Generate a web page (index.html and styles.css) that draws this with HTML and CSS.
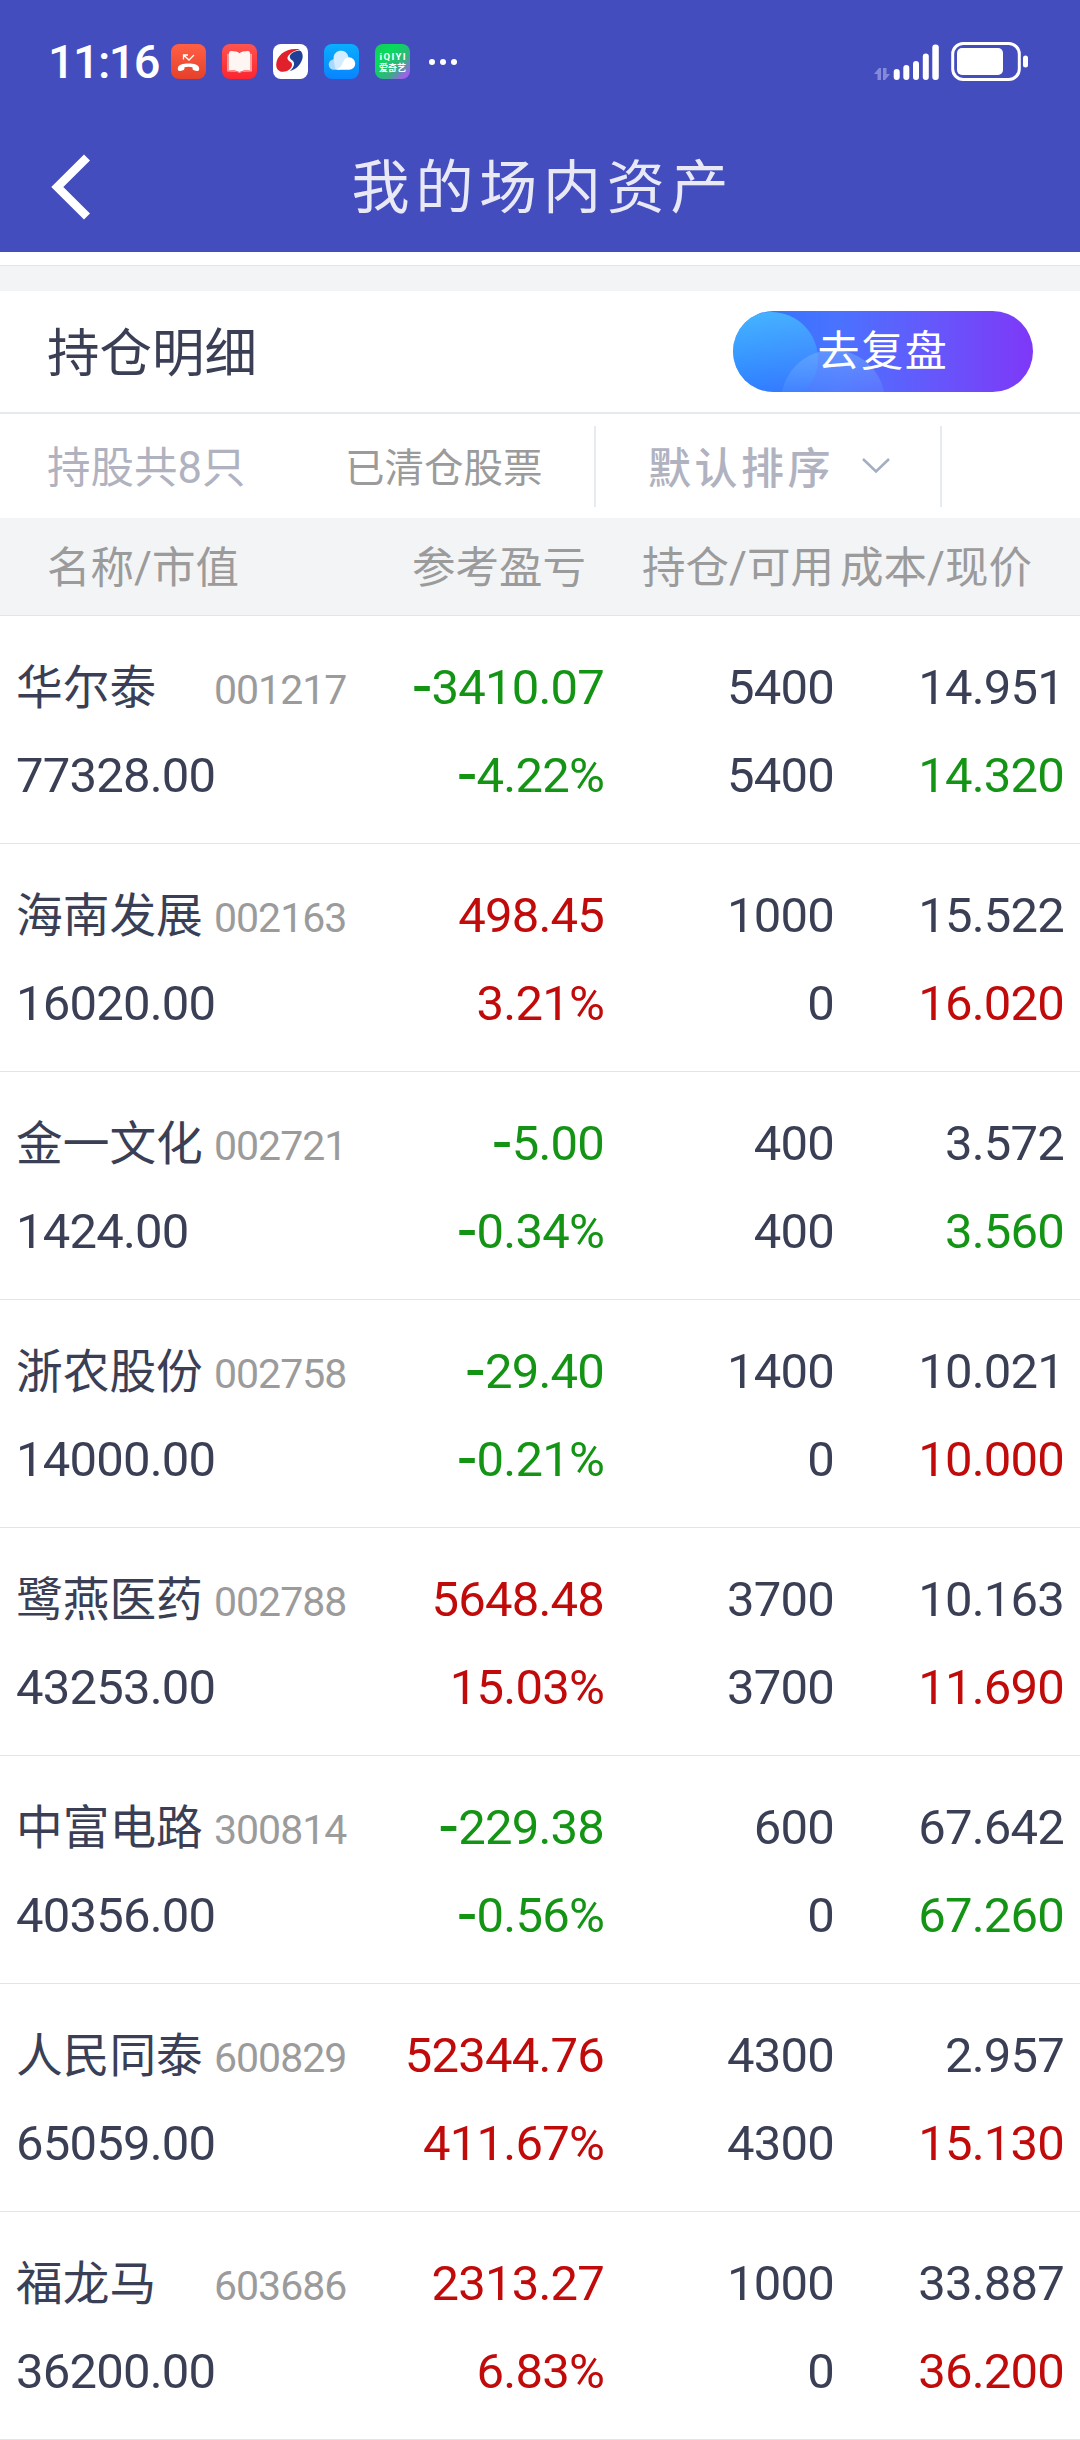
FILE: index.html
```
<!DOCTYPE html>
<html lang="zh-CN">
<head>
    <meta charset="UTF-8">
    <meta name="viewport" content="width=device-width, initial-scale=1.0">
    <title>我的场内资产</title>
    <link rel="stylesheet" href="styles.css">
</head>
<body>
    <header class="header">
        <div class="status-bar">
            <span class="time">11:16</span>
            <div class="apps">
                <svg class="app" viewBox="0 0 35 35">
                    <defs>
                        <linearGradient id="gCall" x1="0" y1="0" x2="0" y2="1"><stop offset="0" stop-color="#ff6045"/><stop offset="1" stop-color="#e6402a"/></linearGradient>
                    </defs>
                    <rect width="35" height="35" rx="8" fill="url(#gCall)"/>
                    <path d="M12.5 15.5V11h4.500M12.500 11l5.500 5 5-5" fill="none" stroke="#fff" stroke-width="1.300"/>
                    <path d="M6.800 24.500c0-4 5.500-5 10.700-5s10.700 1 10.700 5c0 2.600-1 2.600-3.500 2.200-3-.5-3.200-1.200-3.200-3.500-2.500-.7-5.500-.7-8 0 0 2.300-.2 3-3.200 3.500-2.500.4-3.500.4-3.500-2.200z" fill="#fff"/>
                </svg>
                <svg class="app" viewBox="0 0 35 35">
                    <defs>
                        <linearGradient id="gBook" x1="0" y1="0" x2="0" y2="1"><stop offset="0" stop-color="#ff5450"/><stop offset="1" stop-color="#fb2530"/></linearGradient>
                    </defs>
                    <rect width="35" height="35" rx="8" fill="url(#gBook)"/>
                    <path d="M5 10l2.500-.5v16.500l10 2 10-2V9.500l2.500.5v17.500l-10 .5-2.500 1-2.500-1-10-.5z" fill="#ff9d98"/>
                    <path d="M7 9q0-2 2-2 6 0 8.500 2.200Q20 7 26 7q2 0 2 2v17q-7 0-10.500 2Q14 26 7 26z" fill="#fff5f3"/>
                </svg>
                <svg class="app" viewBox="0 0 35 35">
                    <rect width="35" height="35" rx="8" fill="#fff"/>
                    <path d="M27 5.500C14 3 3.500 11 3.200 20.500 3 27.500 9 29 14 27c5-2.200 6.500-7 3.500-9-3-2-4-4-2-6.500 2.500-3.500 7-5.500 11.500-6z" fill="#e2202c"/>
                    <path d="M26.500 6.500c-4 .3-8 2.300-9.500 5-1 2.200.500 3.500 2.500 5 3 2.300 1.500 7.500-3 10.700C24 25.500 29.500 18.500 29.700 12.500c0-3-1-5.200-3.200-6z" fill="#213f96"/>
                </svg>
                <svg class="app" viewBox="0 0 35 35">
                    <defs>
                        <linearGradient id="gCloud" x1="0" y1="0" x2="0" y2="1"><stop offset="0" stop-color="#09aeff"/><stop offset="1" stop-color="#0884ff"/></linearGradient>
                    </defs>
                    <rect width="35" height="35" rx="8" fill="url(#gCloud)"/>
                    <circle cx="10" cy="20.500" r="5.300" fill="#a9d9ff"/>
                    <path d="M9.500 15.500a7.600 7.600 0 0 1 15-2.500L16 25.500h-4.500z" fill="#d4ecff"/>
                    <path d="M11.500 25.800c5-1.500 6-4 7.500-7.500 1.500-3.500 3.500-5 6-5a6.200 6.200 0 0 1 0 12.500z" fill="#fff"/>
                </svg>
                <svg class="app" viewBox="0 0 35 35">
                    <defs>
                        <linearGradient id="gIqiyi" x1="0" y1="0" x2="1" y2="1"><stop offset="0" stop-color="#19c95c"/><stop offset=".3" stop-color="#05dc5a"/><stop offset=".65" stop-color="#35b082"/><stop offset=".9" stop-color="#a45cf0"/></linearGradient>
                    </defs>
                    <rect width="35" height="35" rx="8" fill="url(#gIqiyi)"/>
                    <text class="iqiyi-en" x="17.500" y="16" text-anchor="middle" textLength="26">iQIYI</text>
                    <text class="iqiyi-cn" x="17.500" y="26.500" text-anchor="middle">爱奇艺</text>
                </svg>
            </div>
            <svg class="more" width="30" height="8" viewBox="0 0 30 8" fill="#fff">
                <circle cx="4" cy="4" r="3"/>
                <circle cx="15" cy="4" r="3"/>
                <circle cx="26" cy="4" r="3"/>
            </svg>
            <svg class="signal" width="66" height="40" viewBox="0 0 66 40">
                <path d="M0 32l5-6h2v12H3.500v-6zM9 26h3.500v6H16l-5 6H9z" fill="#8589da"/>
                <g fill="#fff">
                    <rect x="19.700" y="27" width="6" height="11" rx="3"/>
                    <rect x="29.300" y="23" width="6" height="15" rx="3"/>
                    <rect x="39" y="19" width="6" height="19" rx="3"/>
                    <rect x="48.800" y="11.500" width="6" height="26.500" rx="3"/>
                    <rect x="58.300" y="2.500" width="6.500" height="35.500" rx="3"/>
                </g>
            </svg>
            <svg class="battery" width="78" height="40" viewBox="0 0 78 40">
                <rect x="1.700" y="1.500" width="66.600" height="36" rx="10.500" fill="none" stroke="#fff" stroke-width="3"/>
                <rect x="6" y="6" width="46" height="27" rx="5" fill="#fff"/>
                <rect x="72" y="13.500" width="5" height="12" rx="2.500" fill="#fff"/>
            </svg>
        </div>
        <div class="nav-bar">
            <svg class="back" width="44" height="70" viewBox="0 0 44 70">
                <path d="M40 5.500L10.300 35 40 64.500" fill="none" stroke="#fff" stroke-width="8.500"/>
            </svg>
            <h1>我的场内资产</h1>
        </div>
    </header>

    <div class="divider"></div>

    <section class="section-title">
        <h2>持仓明细</h2>
        <button class="review-btn"><span>去复盘</span></button>
    </section>

    <div class="filter">
        <span class="count">持股共8只</span>
        <span class="cleared">已清仓股票</span>
        <div class="sort">
            <span class="sort-label">默认排序</span>
            <svg width="30" height="18" viewBox="0 0 30 18">
                <path d="M2 2l13 12.500L28 2" fill="none" stroke="#a3aec0" stroke-width="2.500"/>
            </svg>
        </div>
    </div>

    <div class="table-head">
        <span>名称/市值</span>
        <span>参考盈亏</span>
        <span>持仓/可用</span>
        <span>成本/现价</span>
    </div>

    <main class="list">
        <div class="row">
            <div class="cell stock"><p><span class="name">华尔泰</span><span class="code">001217</span></p><p>77328.00</p></div>
            <div class="cell green"><p><span class="minus">-</span>3410.07</p><p><span class="minus">-</span>4.22%</p></div>
            <div class="cell"><p>5400</p><p>5400</p></div>
            <div class="cell"><p>14.951</p><p class="green">14.320</p></div>
        </div>
        <div class="row">
            <div class="cell stock"><p><span class="name">海南发展</span><span class="code">002163</span></p><p>16020.00</p></div>
            <div class="cell red"><p>498.45</p><p>3.21%</p></div>
            <div class="cell"><p>1000</p><p>0</p></div>
            <div class="cell"><p>15.522</p><p class="red">16.020</p></div>
        </div>
        <div class="row">
            <div class="cell stock"><p><span class="name">金一文化</span><span class="code">002721</span></p><p>1424.00</p></div>
            <div class="cell green"><p><span class="minus">-</span>5.00</p><p><span class="minus">-</span>0.34%</p></div>
            <div class="cell"><p>400</p><p>400</p></div>
            <div class="cell"><p>3.572</p><p class="green">3.560</p></div>
        </div>
        <div class="row">
            <div class="cell stock"><p><span class="name">浙农股份</span><span class="code">002758</span></p><p>14000.00</p></div>
            <div class="cell green"><p><span class="minus">-</span>29.40</p><p><span class="minus">-</span>0.21%</p></div>
            <div class="cell"><p>1400</p><p>0</p></div>
            <div class="cell"><p>10.021</p><p class="red">10.000</p></div>
        </div>
        <div class="row">
            <div class="cell stock"><p><span class="name">鹭燕医药</span><span class="code">002788</span></p><p>43253.00</p></div>
            <div class="cell red"><p>5648.48</p><p>15.03%</p></div>
            <div class="cell"><p>3700</p><p>3700</p></div>
            <div class="cell"><p>10.163</p><p class="red">11.690</p></div>
        </div>
        <div class="row">
            <div class="cell stock"><p><span class="name">中富电路</span><span class="code">300814</span></p><p>40356.00</p></div>
            <div class="cell green"><p><span class="minus">-</span>229.38</p><p><span class="minus">-</span>0.56%</p></div>
            <div class="cell"><p>600</p><p>0</p></div>
            <div class="cell"><p>67.642</p><p class="green">67.260</p></div>
        </div>
        <div class="row">
            <div class="cell stock"><p><span class="name">人民同泰</span><span class="code">600829</span></p><p>65059.00</p></div>
            <div class="cell red"><p>52344.76</p><p>411.67%</p></div>
            <div class="cell"><p>4300</p><p>4300</p></div>
            <div class="cell"><p>2.957</p><p class="red">15.130</p></div>
        </div>
        <div class="row">
            <div class="cell stock"><p><span class="name">福龙马</span><span class="code">603686</span></p><p>36200.00</p></div>
            <div class="cell red"><p>2313.27</p><p>6.83%</p></div>
            <div class="cell"><p>1000</p><p>0</p></div>
            <div class="cell"><p>33.887</p><p class="red">36.200</p></div>
        </div>
    </main>
</body>
</html>
```
FILE: styles.css
```
* {
    margin: 0;
    padding: 0;
    box-sizing: border-box;
}

body {
    width: 1080px;
    background: #fff;
    color: #3a3f55;
    font-family: Roboto, "Noto Sans CJK SC", sans-serif;
}

svg {
    display: block;
    flex-shrink: 0;
}

/* header */
.header {
    height: 252px;
    background: #444dbe;
}

.status-bar {
    display: flex;
    align-items: center;
    height: 123px;
    padding-left: 48px;
}

.time {
    width: 123px;
    font-size: 47px;
    font-weight: 500;
    line-height: 123px;
    letter-spacing: -1.7px;
    color: #fff;
    white-space: nowrap;
}

.apps {
    display: flex;
    gap: 16px;
}

.app {
    width: 35px;
    height: 35px;
}

.iqiyi-en {
    font-size: 9.5px;
    font-weight: 700;
    fill: #fff;
}

.iqiyi-cn {
    font-size: 9px;
    font-weight: 700;
    fill: #fff;
}

.more {
    margin-left: 18px;
}

.signal {
    margin-left: 416px;
}

.battery {
    margin-left: 11px;
}

.nav-bar {
    display: flex;
    align-items: center;
    height: 127px;
    padding: 0 47px;
}

.nav-bar h1 {
    flex: 1;
    padding: 3px 38px 0 0;
    font-size: 58px;
    font-weight: 400;
    line-height: 80px;
    letter-spacing: 5.8px;
    text-align: center;
    color: #e9e9f6;
}

.divider {
    height: 26px;
    margin-top: 13px;
    border-top: 1px solid #e3e4e6;
    background: #f3f4f6;
}

/* section title */
.section-title {
    display: flex;
    justify-content: space-between;
    align-items: center;
    height: 123px;
    padding: 0 47px;
    border-bottom: 2px solid #e6e9ef;
}

.section-title h2 {
    padding-top: 5px;
    font-size: 52.5px;
    font-weight: 400;
    line-height: 76px;
}

.review-btn {
    position: relative;
    overflow: hidden;
    width: 300px;
    height: 81px;
    border: none;
    border-radius: 41px;
    background: linear-gradient(90deg, #2a74ff 0%, #4a72ff 35%, #6459fb 65%, #7e38f8 100%);
    color: #fff;
    font-family: inherit;
    font-size: 42px;
    letter-spacing: 1.6px;
    line-height: 81px;
}

.review-btn span {
    position: relative;
    z-index: 1;
}

/* light bubbles behind the button label */
.review-btn::before,
.review-btn::after {
    content: "";
    position: absolute;
    border-radius: 50%;
}

.review-btn::before {
    left: -9px;
    top: 1px;
    width: 94px;
    height: 94px;
    background: linear-gradient(170deg, rgba(76, 200, 255, 0.8), rgba(40, 130, 255, 0.3) 85%);
}

.review-btn::after {
    left: 48px;
    top: 39px;
    width: 104px;
    height: 104px;
    background: linear-gradient(180deg, rgba(120, 180, 255, 0.5), rgba(110, 160, 255, 0.1) 50%);
}

/* filter bar */
.filter {
    display: flex;
    align-items: center;
    height: 104px;
    padding-left: 47px;
    white-space: nowrap;
}

.count {
    width: 298px;
    padding-bottom: 4px;
    font-size: 43.5px;
    color: #b0b3bf;
}

.cleared {
    width: 249px;
    padding-bottom: 4px;
    font-size: 39.5px;
    color: #9b9b9b;
}

.sort {
    display: flex;
    align-items: center;
    gap: 27px;
    width: 348px;
    height: 81px;
    padding-left: 52px;
    border-left: 2px solid #e6ebf1;
    border-right: 2px solid #e6ebf1;
    font-size: 43px;
    font-weight: 500;
    letter-spacing: 3.5px;
    color: #b0b3bf;
}

.sort-label {
    padding-bottom: 3px;
}

/* table */
.table-head {
    display: grid;
    grid-template-columns: 365px 230px 198px 1fr;
    height: 98px;
    padding-left: 47px;
    border-bottom: 1px solid #e3e4e6;
    background: #f3f4f6;
    color: #9b9b9b;
    font-size: 43.5px;
    line-height: 102px;
    white-space: nowrap;
}

.row {
    display: grid;
    grid-template-columns: 380px 208px 230px 230px;
    height: 228px;
    padding: 28px 0 0 16px;
    border-bottom: 1px solid #e4e4e6;
}

.cell {
    font-size: 49px;
    line-height: 88px;
    letter-spacing: -0.8px;
    text-align: right;
    white-space: nowrap;
}

.cell p {
    height: 88px;
}

.stock {
    text-align: left;
}

.name {
    display: inline-block;
    width: 198px;
    font-size: 46.7px;
    letter-spacing: 0;
}

.code {
    font-size: 41px;
    letter-spacing: -1px;
    color: #9b9b9b;
}

.minus {
    font-family: "Noto Sans", sans-serif;
    font-size: 64px;
    line-height: 0;
    vertical-align: -2px;
}

.green {
    color: #149414;
}

.red {
    color: #c10a0a;
}
```
